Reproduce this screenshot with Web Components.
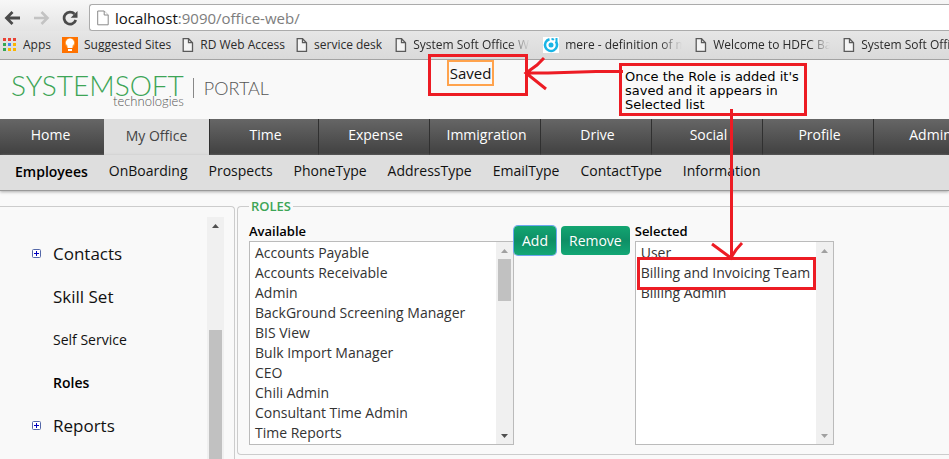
<!DOCTYPE html>
<html lang="en">
<head>
<meta charset="utf-8">
<title>SystemSoft Portal</title>
<style>
  html, body { margin: 0; height: 100%; }
  body { background: #f9f9f9; font: 14px/20px "Open Sans", "Noto Sans", sans-serif; color: #111; overflow: hidden; }
</style>
</head>
<body>
<portal-window></portal-window>

<script>
const define = (name, html, setup) => {
  const template = document.createElement('template');
  template.innerHTML = html;
  customElements.define(name, class extends HTMLElement {
    constructor() {
      super();
      this.attachShadow({ mode: 'open' }).append(template.content.cloneNode(true));
    }
    connectedCallback() { if (setup) setup(this, this.shadowRoot); }
  });
};

const PAGE_ICON = '<svg width="12" height="16" viewBox="0 0 12 16" fill="none" stroke="#5a5a5a" stroke-width="1.3"><path d="M1.2 1.7h5.3l4 4v8.600h-9.300z" fill="#f4f4f4"/><path d="M6.500 1.700v4h4"/></svg>';

define('browser-toolbar', `
<style>
  :host { display: flex; align-items: center; gap: 14px; height: 27px; padding: 4px 0 0 4px; background: linear-gradient(#f7f7f7, #e4e4e4); }
  button { display: flex; padding: 0; border: 0; background: none; }
  .nav { display: flex; gap: 12px; align-items: center; width: 75px; }
  label { flex: 1; display: flex; align-items: center; gap: 6px; height: 25px; margin-left: -4px; padding-left: 7px; background: #fff; border: 1px solid #ababab; border-right: 0; border-radius: 3px 0 0 3px; }
  .field { position: relative; flex: 1; display: flex; }
  input { flex: 1; min-width: 0; padding: 0; border: 0; outline: 0; background: none; font: 15px/22px "Open Sans", sans-serif; color: transparent; }
  .url { position: absolute; left: 0; top: 0; font-size: 15px; line-height: 22px; color: #7d7d7d; pointer-events: none; white-space: nowrap; }
  b { font-weight: 400; color: #111; }
</style>
<div class="nav">
<button aria-label="Back"><svg width="17" height="16" viewBox="0 0 17 16" fill="none" stroke="#4a4a4a" stroke-width="2.8"><path d="M16 8H3M8.500 2L2.500 8l6 6"/></svg></button>
<button aria-label="Forward"><svg width="17" height="16" viewBox="0 0 17 16" fill="none" stroke="#c3c3c3" stroke-width="2.600"><path d="M1 8h13M8.500 2l6 6-6 6"/></svg></button>
<button aria-label="Reload"><svg width="17" height="16" viewBox="0 0 17 16"><path d="M12.500 4A6 6 0 1 0 13.800 10" fill="none" stroke="#4a4a4a" stroke-width="2.700"/><path d="M15.500 1v6.800H8.700z" fill="#4a4a4a"/></svg></button>
</div>
<label aria-label="Address"><svg width="12" height="16" viewBox="0 0 12 16" fill="#fff" stroke="#8a8a8a"><path d="M.7 1h6.500l4 4v9.800H.700z"/><path d="M7.200 1v4h4"/></svg>
<span class="field"><input aria-label="Address" value=""><span class="url"><b>localhost</b>:9090/office-web/</span></span></label>
`);

define('bookmark-link', `
<style>
  :host { display: block; flex: none; }
  :host([clipped]) { margin-left: 2px; }
  a { display: flex; align-items: center; gap: 6px; color: #2b2b2b; text-decoration: none; font-size: 12px; line-height: 16px; white-space: nowrap; }
  .text { overflow: hidden; }
  :host([clipped]) .text { width: 117px; -webkit-mask-image: linear-gradient(90deg, #000 95px, transparent 117px); }
  ::slotted(svg) { display: block; flex: none; }
</style>
<a href="#"><slot name="icon">${PAGE_ICON}</slot><span class="text"><slot></slot></span></a>
`);

define('bookmarks-bar', `
<style>
  :host { display: flex; align-items: center; gap: 11px; height: 28px; padding-left: 3px; background: linear-gradient(#e6e6e6, #dadada); border-bottom: 1px solid #a3a3a3; overflow: hidden; }
</style>
<bookmark-link><svg slot="icon" width="14" height="14"><g fill="#ea4335"><path d="M0 0h3v3H0zM5 0h3v3H5zM10 0h3v3h-3z"/></g><path d="M0 5h3v3H0zM0 10h3v3H0z" fill="#34a853"/><path d="M5 5h3v3H5z" fill="#4285f4"/><path d="M10 5h3v3h-3zM5 10h3v3H5zM10 10h3v3h-3z" fill="#fbb500"/></svg>Apps</bookmark-link>
<bookmark-link><svg slot="icon" width="16" height="16"><path d="M0 0h16v16H0z" fill="#ff7200"/><circle cx="8" cy="6" r="5" fill="#ffa23b"/><path d="M8 1.500a4 4 0 0 0-2.500 7.200V11h5V8.700A4 4 0 0 0 8 1.500zM6 12h4v2H6z" fill="#fff"/></svg>Suggested Sites</bookmark-link>
<bookmark-link>RD Web Access</bookmark-link>
<bookmark-link>service desk</bookmark-link>
<bookmark-link clipped>System Soft Office Web</bookmark-link>
<bookmark-link clipped><svg slot="icon" width="16" height="16"><path d="M0 0h16v16H0z" fill="#fff"/><path d="M6.500 2.200A6 6 0 1 0 12.800 4.400" fill="none" stroke="#19b5e6" stroke-width="2.500"/><path d="M8.500 2.100q1.500 0 2.500.700M13.500 1v5" fill="none" stroke="#19b5e6" stroke-width="2"/><circle cx="8" cy="8" r="2.500" fill="#19b5e6"/></svg>mere - definition of mere</bookmark-link>
<bookmark-link clipped>Welcome to HDFC Bank</bookmark-link>
<bookmark-link clipped>System Soft Office Web</bookmark-link>
`);

define('portal-header', `
<style>
  :host { display: grid; grid-template-columns: 1fr auto 1fr; height: 59px; padding-right: 8px; }
  .logo { display: flex; align-items: flex-start; gap: 9px; padding: 12px 0 0 11px; font-family: Lato, sans-serif; font-weight: 300; white-space: nowrap; }
  .name { display: grid; justify-items: end; color: #3da556; font-size: 28px; line-height: 26px; }
  small { margin-top: -3px; color: #555; font-size: 13px; line-height: 13px; }
  .portal { margin-top: 6px; padding-left: 10px; border-left: 1px solid #888; color: #555; font-size: 18px; line-height: 20px; }
  output { align-self: start; padding: 0 1px; border: 2px solid #ffa34d; font-size: 15px; line-height: 22px; }
</style>
<div class="logo"><div class="name">SYSTEMSOFT<small>technologies</small></div><div class="portal">PORTAL</div></div>
<output>Saved</output>
`);

define('main-nav', `
<style>
  nav { display: flex; height: 36px; background: linear-gradient(#666, #404040); overflow: hidden; }
  a { flex: none; box-sizing: border-box; width: 111px; padding-left: 3px; border-left: 1px solid #303030; color: #fff; font-size: 14px; line-height: 32px; font-weight: 500; text-align: center; text-decoration: none; }
  a:first-child { width: 104px; padding: 0 3px 0 0; border: 0; }
  a.current { width: 105px; padding: 0 1px 0 0; border-color: #dedede; background: #dedede; color: #444; line-height: 34px; }
  a.current + a { width: 109px; }
</style>
<nav><a href="#">Home</a><a href="#" class="current">My Office</a><a href="#">Time</a><a href="#">Expense</a><a href="#">Immigration</a><a href="#">Drive</a><a href="#">Social</a><a href="#">Profile</a><a href="#">Admin</a></nav>
`);

define('sub-nav', `
<style>
  nav { display: flex; gap: 21px; height: 35px; padding-left: 15px; background: #dedede; border-bottom: 1px solid #999; box-shadow: 0 1px 3px #aaa; white-space: nowrap; }
  a { color: #111; font-size: 14px; line-height: 32px; text-decoration: none; }
  a:first-child { color: #000; font-weight: 600; line-height: 34px; }
</style>
<nav><a href="#">Employees</a><a href="#">OnBoarding</a><a href="#">Prospects</a><a href="#">PhoneType</a><a href="#">AddressType</a><a href="#">EmailType</a><a href="#">ContactType</a><a href="#">Information</a></nav>
`);

define('scroll-track', `
<style>
  :host { display: flex; flex-direction: column; align-items: center; width: 17px; background: #f0f0f0; }
  svg { flex: none; fill: #505050; }
  :host([top]) svg:first-of-type, :host([idle]) svg { fill: #a0a0a0; }
  .thumb { width: 13px; background: #c1c1c1; margin-bottom: auto; }
  :host([end]) .thumb { flex: 1; margin-bottom: 0; }
  :host([end]) svg:last-of-type { display: none; }
</style>
<svg width="17" height="17"><path d="M5 11h7L8.500 7z"/></svg><div class="thumb"></div><svg width="17" height="17"><path d="M5 7h7l-3.500 4z"/></svg>
`, (host, root) => {
  const thumb = root.querySelector('.thumb');
  thumb.style.height = (host.getAttribute('size') || 0) + 'px';
  thumb.style.marginTop = (host.getAttribute('offset') || 0) + 'px';
});

define('tree-item', `
<style>
  :host { display: grid; grid-template-columns: 21px 1fr; align-items: center; height: 43px; font-size: 17px; }
  :host([small]) { font-size: 14px; }
  :host([current]) { font-weight: 600; }
  :host([current]) a { color: #000; }
  a { grid-column: 2; color: #111; text-decoration: none; }
  button { display: none; padding: 0; border: 0; background: none; }
  :host([branch]) button { display: flex; }
</style>
<button aria-label="Expand"><svg width="9" height="9" fill="#fff" stroke="#5468a8"><rect x=".5" y=".5" width="8" height="8" rx="1"/><path d="M2 4.500h5M4.500 2v5" stroke="#0000c0"/></svg></button><a href="#"><slot></slot></a>
`);

define('side-tree', `
<style>
  :host { display: flex; justify-content: space-between; box-sizing: border-box; margin-top: 15px; padding: 10px 10px 0 32px; border: 1px solid #ccc; border-width: 1px 1px 0 0; border-radius: 0 4px 0 0; overflow: hidden; }
  .items { padding-top: 15px; }
</style>
<div class="items">
<tree-item branch>Contacts</tree-item><tree-item>Skill Set</tree-item><tree-item small>Self Service</tree-item><tree-item small current>Roles</tree-item><tree-item branch>Reports</tree-item>
</div>
<scroll-track end offset="96"></scroll-track>
`);

define('role-list', `
<style>
  :host { display: block; }
  label { display: block; color: #000; font-weight: 600; font-size: 13px; line-height: 20px; }
  .box { display: flex; box-sizing: border-box; height: 204px; border: 1px solid #bbb; background: #fff; }
  select { flex: 1; min-width: 0; height: 202px; padding: 1px 0 0 3px; border: 0; outline: 0; background: none; color: #333; font: 14px/20px "Open Sans", sans-serif; scrollbar-width: none; }
  select::-webkit-scrollbar { display: none; }
  option { height: 20px; min-height: 20px; padding: 0 2px; line-height: 20px; box-sizing: border-box; }
</style>
<label for="list"></label>
<div class="box"><select id="list" multiple size="10"></select><slot></slot></div>
`, (host, root) => {
  root.querySelector('label').textContent = host.getAttribute('label');
  root.querySelector('select').replaceChildren(...host.getAttribute('options').split('|').map(t => new Option(t)));
});

define('action-button', `
<style>
  :host { display: block; }
  button { box-sizing: border-box; height: 29px; padding: 0 8px; border: 0; border-radius: 4px; background: linear-gradient(#13a571, #0e8f66 50%, #13a775); color: #fff; font: 14px/28px "Open Sans", sans-serif; }
  :host([focused]) button { box-shadow: 0 0 0 1px #6ea6f0; }
</style>
<button><slot></slot></button>
`);

define('roles-panel', `
<style>
  :host { display: block; min-width: 0; }
  fieldset { margin: 5px 0 0 2px; padding: 5px 0 9px 11px; border: 1px solid #ccc; border-right: 0; border-radius: 4px 0 0 4px; }
  legend { padding: 0 2px; color: #3da556; font-weight: 600; font-size: 13px; line-height: 20px; }
  .row { display: flex; align-items: flex-start; }
  .available { width: 265px; }
  .selected { width: 199px; margin-left: 5px; }
  .buttons { display: flex; gap: 5px; padding-top: 5px; }
</style>
<fieldset><legend>ROLES</legend>
<div class="row">
<role-list class="available" label="Available" options="Accounts Payable|Accounts Receivable|Admin|BackGround Screening Manager|BIS View|Bulk Import Manager|CEO|Chili Admin|Consultant Time Admin|Time Reports"><scroll-track top size="42"></scroll-track></role-list>
<div class="buttons"><action-button focused>Add</action-button><action-button>Remove</action-button></div>
<role-list class="selected" label="Selected" options="User|Billing and Invoicing Team|Billing Admin"><scroll-track idle></scroll-track></role-list>
</div></fieldset>
`);

define('markup-overlay', `
<style>
  :host { position: absolute; left: 0; top: 0; pointer-events: none; }
  svg { display: block; position: relative; }
  p { position: absolute; left: 619px; top: 63px; box-sizing: border-box; width: 188px; margin: 0; padding: 4px 0 1px 3px; border: 3px solid #ed1c24; background: #f9f9f9; color: #000; font: 13px/14px "DejaVu Sans", sans-serif; }
  .highlight { position: absolute; left: 637px; top: 257px; box-sizing: border-box; width: 179px; height: 33px; border: 3px solid #ed1c24; }
</style>
<p>Once the Role is added it's saved and it appears in Selected list</p>
<div class="highlight"></div>
<svg width="840" height="300" fill="none" stroke="#ed1c24" stroke-width="3"><path d="M429.500 55.500h97v39h-97z"/><path d="M623 71.500H596l-48 1.500H527M544 58l-7 7-11 8 20 16M731.500 109v147M712 244l19 14q4-8 11-15"/></svg>
`);

define('portal-window', `
<style>
  :host { position: relative; display: flex; flex-direction: column; height: 100vh; overflow: hidden; }
  main { flex: 1; min-height: 0; display: grid; grid-template-columns: 235px minmax(0, 1fr); }
</style>
<browser-toolbar></browser-toolbar>
<bookmarks-bar></bookmarks-bar>
<portal-header></portal-header>
<main-nav></main-nav>
<sub-nav></sub-nav>
<main><side-tree></side-tree><roles-panel></roles-panel></main>
<markup-overlay></markup-overlay>
`);
</script>
</body>
</html>
